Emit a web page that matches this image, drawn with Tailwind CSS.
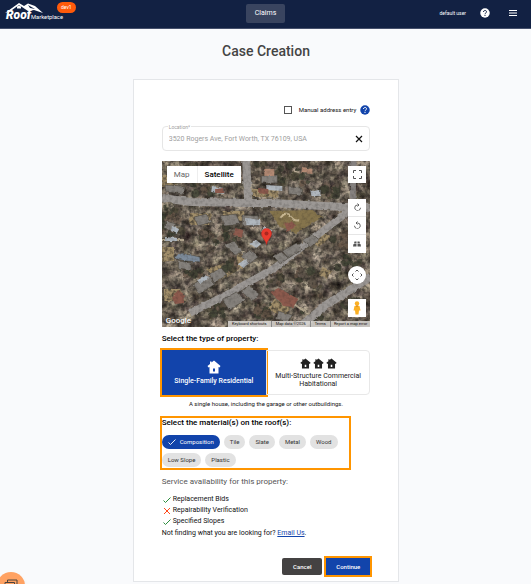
<!DOCTYPE html>
<html lang="en">
<head>
  <meta charset="UTF-8" />
  <meta name="viewport" content="width=device-width, initial-scale=1.0"/>
  <title>Roof Marketplace — Case Creation</title>
  <script src="https://cdn.jsdelivr.net/npm/@tailwindcss/browser@4"></script>
</head>
<body class="bg-[#f9fafc] font-['Roboto',sans-serif] text-[7px] leading-[10px] text-[#111111] overflow-hidden">

  <header class="grid grid-cols-3 items-start h-[29px] bg-[#122143] border-b border-[#45506c] text-white">
    <div class="flex items-start">
      <svg class="w-[60px] h-[24px] ml-1" viewBox="0 0 60 24" role="img" aria-label="Roof Marketplace">
        <path d="M1 13L15 3L20 6L24 3.500L31 6L39 13L30 10L24 11L15 5L6 11.500Z" fill="#fff"/>
        <path d="M13 8.500v-2l2-1l2 1v2z" fill="#fff"/>
        <path d="M24 5L31 9L26 8Z" fill="#122143"/>
        <text x="2" y="19" fill="#fff" font-family="Roboto, sans-serif" font-size="12" font-weight="900" font-style="italic">Roof</text>
        <text x="27" y="18.500" fill="#fff" font-family="Roboto, sans-serif" font-size="5.800">Marketplace</text>
      </svg>
      <span class="-ml-[7px] mt-[2px] px-1 h-[11px] rounded-full bg-[#ff5a0a] text-[5px] leading-[11px]">dev1</span>
    </div>
    <nav class="flex justify-center pt-1">
      <a href="#" class="px-[9px] h-[19px] leading-[19px] rounded-xs bg-[#39445f]">Claims</a>
    </nav>
    <div class="flex items-center justify-end gap-[13px] h-[26px] pr-[14px]">
      <span class="text-[5px]">default user</span>
      <button aria-label="Help" class="ml-px">
        <svg class="size-[10px]" viewBox="0 0 20 20"><circle cx="10" cy="10" r="9.500" fill="#fff"/><path d="M7 8 C7 3.500 13.500 4 13 8 C12.800 10 10 10 10 12.500 M10 14 V16" fill="none" stroke="#122143" stroke-width="2"/></svg>
      </button>
      <button aria-label="Menu" class="ml-[6px]">
        <svg class="w-[8px] h-[8px]" viewBox="0 0 8 8"><path d="M0 1.500H8M0 4H8M0 6.500H8" stroke="#fff" stroke-width="1"/></svg>
      </button>
    </div>
  </header>

  <div class="pl-px">
  <h1 class="mt-3 text-center text-[14px] leading-5 font-medium text-[#444444]">Case Creation</h1>

  <main class="w-[50.3%] mx-auto mt-[18px] px-7 pt-[25px] pb-[6px] bg-white border border-[#e4e6e9]">

    <div class="flex items-center justify-end h-[10px] text-[6px]">
      <input id="manual" type="checkbox" class="appearance-none size-2 border border-[#555555] bg-white"/>
      <label for="manual" class="ml-[7px]">Manual address entry</label>
      <button aria-label="Address help" class="ml-1">
        <svg class="size-[10px]" viewBox="0 0 20 20"><circle cx="10" cy="10" r="9.500" fill="#1244ab"/><path d="M7 8 C7 3.500 13.500 4 13 8 C12.800 10 10 10 10 12.500 M10 14 V16" fill="none" stroke="#fff" stroke-width="2"/></svg>
      </button>
    </div>

    <div class="relative flex items-center mt-[11px] h-[25px] px-[6px] border border-[#e6e6e6] rounded-sm">
      <label for="location" class="absolute -top-1 left-[5px] px-px bg-white text-[5px] leading-[8px] text-[#a0a0a0]">Location*</label>
      <input id="location" type="text" value="3520 Rogers Ave, Fort Worth, TX 76109, USA" class="flex-1 min-w-0 text-[#9e9e9e] outline-none"/>
      <button aria-label="Clear location">
        <svg class="size-2" viewBox="0 0 8 8"><path d="M1 1L7 7M7 1L1 7" stroke="#111" stroke-width="1.200"/></svg>
      </button>
    </div>

    <!-- satellite map -->
    <div class="relative mt-[10px] h-[166px] overflow-hidden bg-[#71675a]">
      <svg class="block w-full h-full" viewBox="0 0 208 166" preserveAspectRatio="none" aria-hidden="true">
        <filter id="ground" x="0" y="0" width="100%" height="100%" color-interpolation-filters="sRGB">
          <feTurbulence type="fractalNoise" baseFrequency="0.100" numOctaves="4" seed="8"/>
          <feColorMatrix values="0.900 0 0 0 0  0.850 0.050 0 0 -0.040  0.750 0 0.050 0 -0.040  0 0 0 0 1"/>
        </filter>
        <filter id="rough" x="0" y="0" width="100%" height="100%" color-interpolation-filters="sRGB">
          <feTurbulence type="fractalNoise" baseFrequency="0.200" numOctaves="2" seed="4" result="n"/>
          <feDisplacementMap in="SourceGraphic" in2="n" scale="3" xChannelSelector="R" yChannelSelector="G"/>
        </filter>
        <filter id="grain" x="0" y="0" width="100%" height="100%" color-interpolation-filters="sRGB">
          <feTurbulence type="fractalNoise" baseFrequency="0.300" numOctaves="2" seed="12"/>
          <feColorMatrix values="0 0 0 0 0.150  0 0 0 0 0.140  0 0 0 0 0.130  2.500 0 0 0 -1.050"/>
        </filter>
        <rect width="208" height="166" filter="url(#ground)"/>
        <g filter="url(#rough)">
          <g fill="#a08d69">
            <path d="M28 52h22l-3 12h-20zM60 50h22v10h-18zM0 86h12v14H0zM2 128h16l6 12H2zM44 108l26-8 8 8-22 12zM146 78l14-8 8 6-12 10zM160 106l10 4-6 8-8-4zM112 138l16 10-8 8-14-8zM76 92l14 4-10 12-8-4zM0 14h14v12H0zM88 28h28v8H88z"/>
          </g>
          <g id="trees"></g>
        </g>
        <rect width="208" height="166" filter="url(#grain)" opacity=".6"/>
        <g filter="url(#rough)">
          <path d="M107 50L150 49L160 56L134 72L118 66Z" fill="#85744c"/>
          <g fill="none" stroke="#9c9895">
            <path d="M191 0L190 44" stroke-width="6" stroke="#85817f"/>
            <path d="M84 0L86 42" stroke-width="8"/>
            <path d="M0 37L28 41L84 42L112 42L160 45L208 47" stroke-width="8"/>
            <path d="M28 152L60 136L112 107L154 75L188 49" stroke-width="7"/>
            <path d="M137 166L165 143L208 116" stroke-width="8"/>
            <path d="M0 79H22M74 86L96 104M130 142L146 153" stroke-width="2" stroke="#b5a991"/>
          </g>
          <g fill="#85817c" stroke="#4a443d" stroke-width=".6">
            <path d="M12 96l8-4 18 4v5l-14-1-10-2z" fill="#7d8b9a"/>
            <path d="M32 56l12-3 6 8-14 4zM58 55l16-2 4 10-16 2zM80 54l16 1v10H80zM31 123l15-8 7 8-16 10zM47 113l12-6 6 7-13 8zM62 84l10-4 8 10-7 4zM79 95l9-6 8 7-9 7zM17 100l12 2v7l-13-2zM4 60l10 3-3 8-8-4zM99 15l16-1v8H99zM126 26l14 1v7l-14-1zM3 24l20 1-1 8-18-2zM60 139l14-8 9 8-16 10zM79 130l8-5 11 8-9 7zM120 90l14-8 6 6-14 9zM140 79l10-6 7 6-9 7zM111 95l8-4 7 6-8 6zM116 150l14 4-4 7-12-3z"/>
          </g>
          <g fill="#b0b7be">
            <path d="M50 25l12 2v6l-13-2zM84 57l14 2v5H84zM104 24l16 1v5l-16-1zM10 65l7 3-2 5-6-3zM88 83l6-4 5 4-5 4zM3 76l12 1v3H3zM35 119l8-5 3 3-8 6zM101 66l9 3-3 5-8-3zM148 30l10-1v6h-9zM76 103l7-5 4 4-6 5z"/>
          </g>
          <g fill="#8c5a4d">
            <path d="M108 131l8-4 20 11-5 8-10-1zM10 137l6-8 7 5-1 8-9 1zM73 67l8 2-1 7-8-2zM121 63l8-3 5 5-9 6zM96 27l10 1v5l-10-2zM53 28l9-1v5h-9z"/>
            <path d="M102 8h10v7h-10zM140 6l10 2v5l-11-1z" fill="#b38a74"/>
          </g>
          <path d="M118 57Q124 49 128 55T137 59" fill="none" stroke="#c9b893" stroke-width="2"/>
        </g>
        <rect width="208" height="166" filter="url(#grain)" opacity=".22"/>
      </svg>

      <div class="absolute top-[5px] left-[5px] flex h-[17px] bg-white text-[8px]">
        <button class="px-[7px] text-[#666666] border-r border-[#eeeeee]">Map</button>
        <button class="px-[7px] font-medium text-black">Satellite</button>
      </div>

      <!-- property pin -->
      <svg class="absolute left-1/2 top-[67px] -ml-[5px] w-[11px] h-[17px]" viewBox="0 0 22 34"><path d="M11 33C10 24 1 20 1 11A10 10 0 0 1 21 11C21 20 12 24 11 33Z" fill="#ea3b2e" stroke="#c22b22"/><circle cx="11" cy="11" r="4" fill="#aa2720"/></svg>

      <div class="absolute top-[5px] right-1 bottom-[10px] w-[18px] flex flex-col items-center">
        <button aria-label="Full screen" class="grid place-items-center w-[18px] h-[17px] bg-white">
          <svg class="size-[9px]" viewBox="0 0 18 18" fill="none" stroke="#555" stroke-width="2"><path d="M1 6V1H6M12 1H17V6M17 12V17H12M6 17H1V12"/></svg>
        </button>
        <div class="mt-4 w-full bg-white divide-y divide-[#e6e6e6]">
          <button aria-label="Rotate clockwise" class="grid place-items-center w-full h-[18px]">
            <svg class="size-[9px]" viewBox="0 0 18 18" fill="none" stroke="#555" stroke-width="1.800"><path d="M11 4H9A5.500 5.500 0 1 0 9 15A5.500 5.500 0 0 0 15 9.500" stroke-dasharray="15 1.500 3 1.500"/><path d="M9 1L12 4L9 7"/></svg>
          </button>
          <button aria-label="Rotate counterclockwise" class="grid place-items-center w-full h-[18px]">
            <svg class="size-[9px] -scale-x-100" viewBox="0 0 18 18" fill="none" stroke="#555" stroke-width="1.800"><path d="M11 4H9A5.500 5.500 0 1 0 9 15A5.500 5.500 0 0 0 15 9.500" stroke-dasharray="15 1.500 3 1.500"/><path d="M9 1L12 4L9 7"/></svg>
          </button>
          <button aria-label="Tilt map" class="grid place-items-center w-full h-[18px]">
            <svg class="w-[8px] h-[6px]" viewBox="0 0 16 12" fill="#555"><path d="M3 1H7V5H2ZM9 1H13L14 5H9ZM1 6H7V11H0ZM9 6H15L16 11H9Z"/></svg>
          </button>
        </div>
        <button aria-label="Map camera controls" class="mt-[13px] grid place-items-center size-[18px] shrink-0 rounded-full bg-white">
          <svg class="size-[12px]" viewBox="0 0 24 24" fill="none" stroke="#555" stroke-width="2"><path d="M9 5L12 2L15 5M9 19L12 22L15 19M5 9L2 12L5 15M19 9L22 12L19 15"/></svg>
        </button>
        <button aria-label="Street view" class="mt-auto grid place-items-center w-[18px] h-[18px] bg-white">
          <svg class="w-[8px] h-[14px]" viewBox="0 0 16 28"><circle cx="8" cy="5" r="4.500" fill="#fbb024"/><path d="M3 10H13L15 19H12L11 27H5L4 19H1Z" fill="#fbb024"/><path d="M5 9H11L8 12Z" fill="#cf7d12"/></svg>
        </button>
      </div>

      <span class="absolute left-1 bottom-0 text-[8px] leading-3 font-medium text-white">Google</span>
      <div class="absolute right-0 bottom-0 flex h-[6px] bg-[#dedbd7]/85 text-[4px] leading-[6px] text-[#111111] whitespace-nowrap">
        <button class="px-[4px]">Keyboard shortcuts</button>
        <span class="px-[4px] border-l border-[#888888]">Map data ©2026</span>
        <a href="#" class="px-[4px] border-l border-[#888888]">Terms</a>
        <a href="#" class="px-[3px] border-l border-[#888888]">Report a map error</a>
      </div>
    </div>

    <h2 class="mt-[7px] text-[8px] font-medium text-black">Select the type of property:</h2>
    <div class="mt-[6px] grid grid-cols-2 h-[45px]">
      <button class="flex flex-col items-center justify-center gap-[2px] bg-[#1244ab] text-white font-medium outline-2 outline-[#ff9500]">
        <svg class="w-[14px] h-[14px]" viewBox="0 0 28 28" fill="currentColor"><path fill-rule="evenodd" d="M14 1L27 12L25 15L23 14V27H5V14L3 15L1 12L6 8V3H9V5ZM12 17V23H16V17Z"/></svg>
        Single-Family Residential
      </button>
      <button class="flex flex-col items-center justify-center gap-[3px] pt-px border border-[#e8e8e8] rounded-r-sm leading-[8px] text-[#222222]">
        <span class="flex gap-[2px]">
          <svg class="size-[11px]" viewBox="0 0 28 28" fill="currentColor"><path fill-rule="evenodd" d="M14 1L27 12L25 15L23 14V27H5V14L3 15L1 12L6 8V3H9V5ZM12 17V23H16V17Z"/></svg>
          <svg class="size-[11px]" viewBox="0 0 28 28" fill="currentColor"><path fill-rule="evenodd" d="M14 1L27 12L25 15L23 14V27H5V14L3 15L1 12L6 8V3H9V5ZM12 17V23H16V17Z"/></svg>
          <svg class="size-[11px]" viewBox="0 0 28 28" fill="currentColor"><path fill-rule="evenodd" d="M14 1L27 12L25 15L23 14V27H5V14L3 15L1 12L6 8V3H9V5ZM12 17V23H16V17Z"/></svg>
        </span>
        <span>Multi-Structure Commercial<br>Habitational</span>
      </button>
    </div>
    <p class="mt-1 text-center text-[6px]">A single house, including the garage or other outbuildings.</p>

    <section class="mt-[9px] w-9/10 h-[50px] outline-2 outline-[#ff9500]">
      <h2 class="text-[8px] leading-[9px] font-medium text-black">Select the material(s) on the roof(s):</h2>
      <div class="mt-2 flex flex-wrap gap-x-1 gap-y-1 text-[6px] leading-[14px] text-[#333333]">
        <button class="flex items-center gap-1 h-[14px] px-[6px] rounded-full bg-[#1244ab] text-white">
          <svg class="size-2" viewBox="0 0 16 16"><path d="M1 9L5 13L15 3" fill="none" stroke="#fff" stroke-width="1.800"/></svg>
          Composition
        </button>
        <button class="h-[14px] px-[6px] rounded-full bg-[#e2e2e2]">Tile</button>
        <button class="h-[14px] px-[6px] rounded-full bg-[#e2e2e2]">Slate</button>
        <button class="h-[14px] px-[6px] rounded-full bg-[#e2e2e2]">Metal</button>
        <button class="h-[14px] px-[6px] rounded-full bg-[#e2e2e2]">Wood</button>
        <button class="h-[14px] px-[6px] rounded-full bg-[#e2e2e2]">Low Slope</button>
        <button class="h-[14px] px-[6px] rounded-full bg-[#e2e2e2]">Plastic</button>
      </div>
    </section>

    <h2 class="mt-[9px] text-[8px] text-[#555555]">Service availability for this property:</h2>
    <ul class="mt-[7px] leading-[11px]">
      <li class="flex items-center gap-[2px] pl-px"><svg class="size-2" viewBox="0 0 16 16"><path d="M1 9L5 13L15 3" fill="none" stroke="#2b8c3c" stroke-width="2"/></svg>Replacement Bids</li>
      <li class="flex items-center gap-[2px] pl-px"><svg class="size-2" viewBox="0 0 16 16"><path d="M2 2L14 14M14 2L2 14" fill="none" stroke="#ff4a1c" stroke-width="2"/></svg>Repairability Verification</li>
      <li class="flex items-center gap-[2px] pl-px"><svg class="size-2" viewBox="0 0 16 16"><path d="M1 9L5 13L15 3" fill="none" stroke="#2b8c3c" stroke-width="2"/></svg>Specified Slopes</li>
    </ul>
    <p class="mt-px">Not finding what you are looking for? <a href="#" class="text-[#1244ab] underline">Email Us</a>.</p>

    <div class="mt-5 flex justify-end gap-1 text-[6px] font-medium text-white">
      <button class="w-10 h-[17px] rounded-xs bg-[#444242]">Cancel</button>
      <button class="w-11 h-[17px] bg-[#1244ab] outline-2 outline-[#ff9500]">Continue</button>
    </div>
  </main>
  </div>

  <button aria-label="Open chat" class="fixed -left-[3px] -bottom-[16px] size-[28px] rounded-full bg-[#ffa263] shadow-md">
    <svg class="mx-auto size-[14px]" viewBox="0 0 28 28" fill="none" stroke="#4b443f" stroke-width="2"><path d="M7 6V2H26V17H22M2 7H21V22H12L8 26V22H2Z"/></svg>
  </button>

  <script>
    // scatter tree crowns between the streets, same layout on every load
    let seed = 17;
    function rand() {
      seed = (seed * 16807) % 2147483647;
      return seed / 2147483647;
    }

    const colors = ["#434637", "#4f4a3a", "#5a5146", "#665648", "#3f4133", "#705f52"];
    const groves = [[12, 62, 14], [40, 26, 9], [150, 122, 18], [68, 104, 6], [30, 112, 8], [8, 52, 9], [168, 30, 8], [130, 14, 16], [104, 12, 12], [70, 72, 10], [186, 100, 12], [178, 80, 10], [24, 12, 12], [100, 150, 9], [150, 158, 10], [50, 80, 12], [110, 118, 10], [54, 150, 9], [190, 144, 9]];
    let crowns = "";
    groves.forEach(([x, y, r]) => {
      for (let i = 0; i < 14; i++) {
        const cx = x + (rand() - 0.5) * r * 2;
        const cy = y + (rand() - 0.5) * r * 1.6;
        crowns += `<circle cx="${cx}" cy="${cy}" r="${1.5 + rand() * 3}" fill="${colors[Math.floor(rand() * colors.length)]}" opacity=".85"/>`;
      }
    });
    document.getElementById("trees").innerHTML = crowns;
  </script>
</body>
</html>
